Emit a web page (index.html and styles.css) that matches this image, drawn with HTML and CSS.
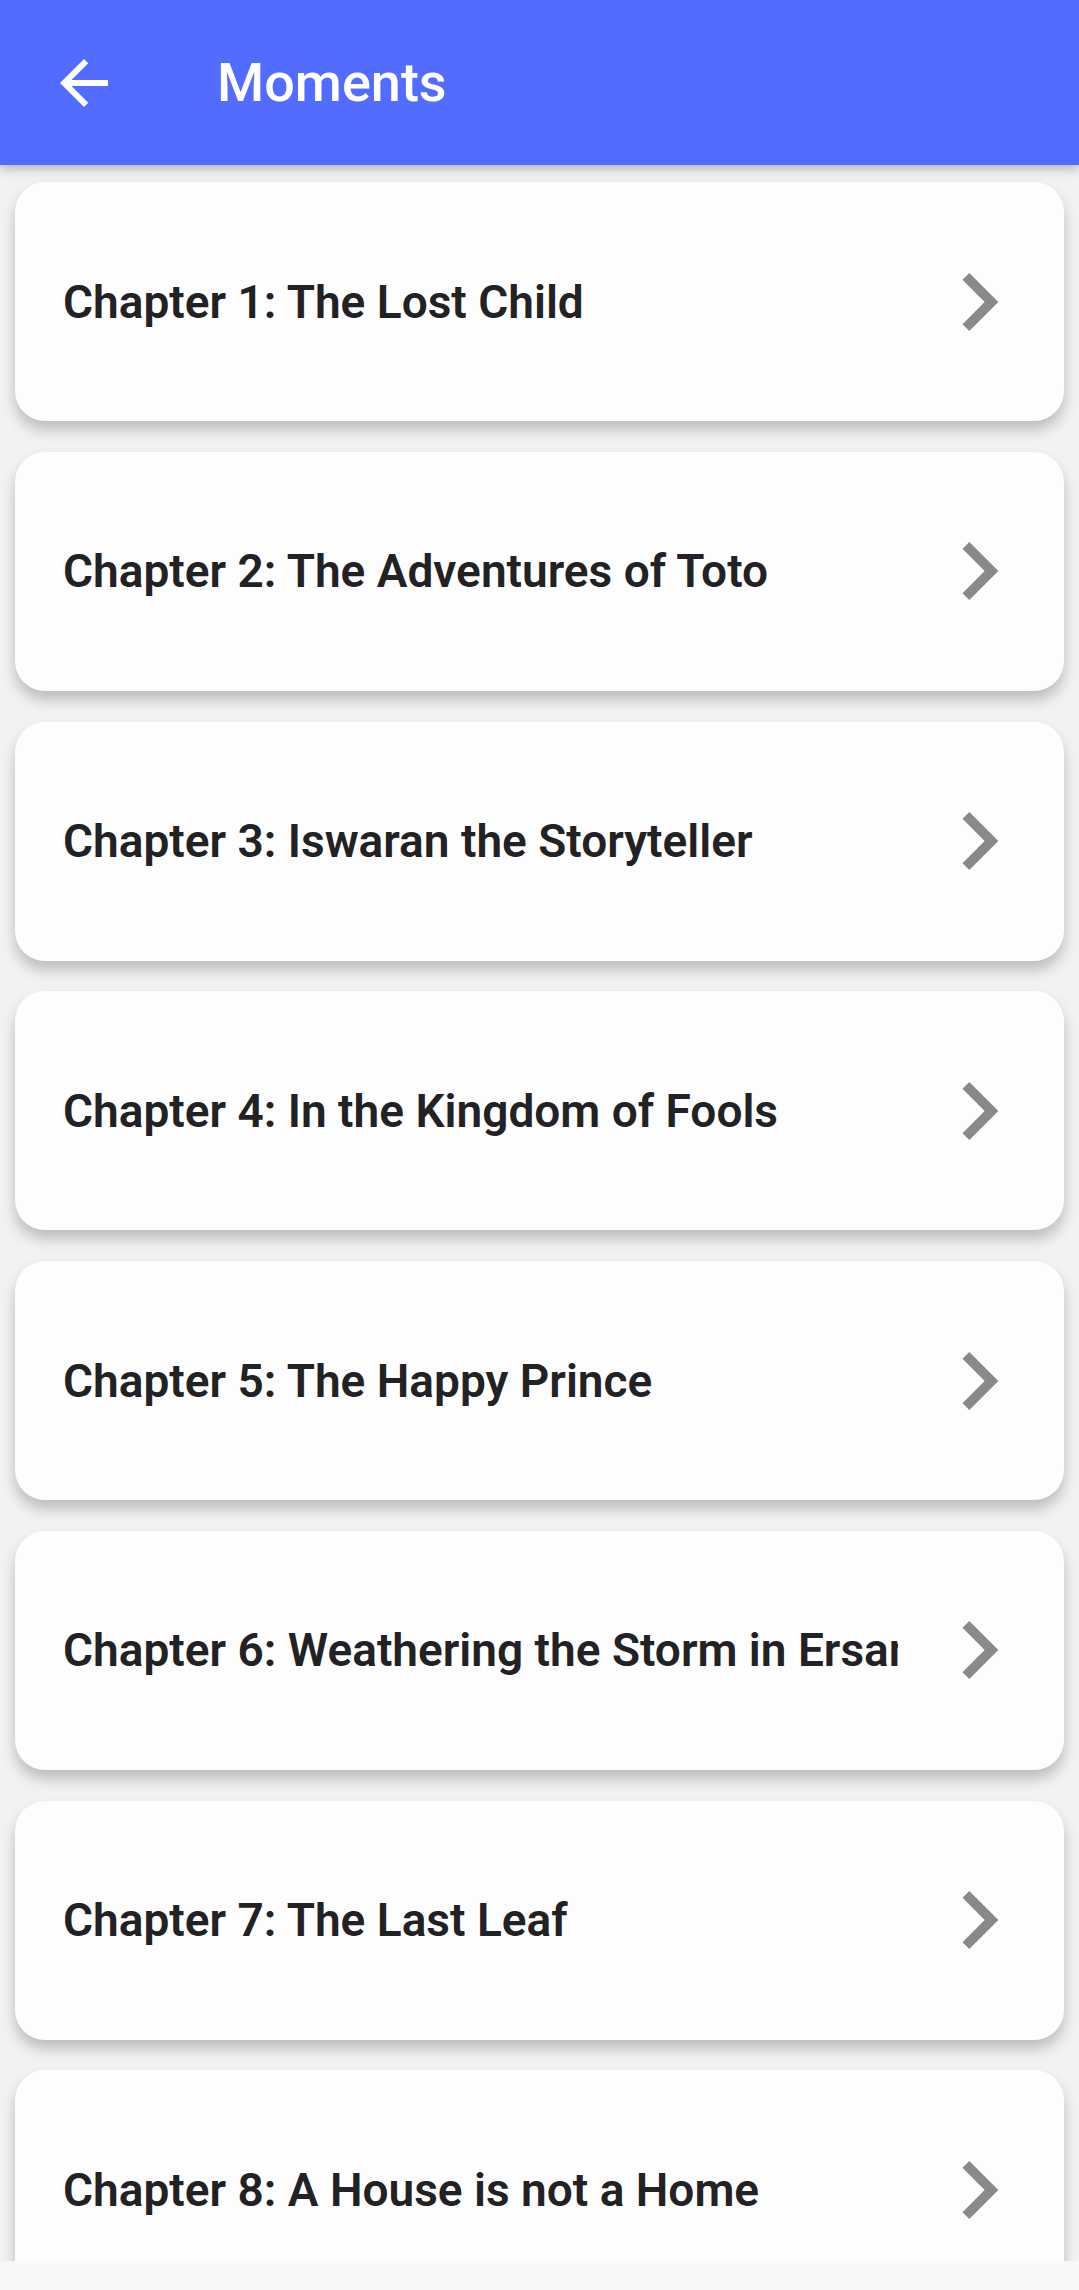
FILE: index.html
```html
<!DOCTYPE html>
<html>
<head>
<meta charset="utf-8">
<link rel="stylesheet" href="styles.css">
</head>
<body>
<header class="appbar">
  <button class="back" aria-label="Back">
    <svg viewBox="0 0 24 24" width="72" height="72"><path fill="#fff" d="M20 11H7.83l5.59-5.59L12 4l-8 8 8 8 1.41-1.41L7.83 13H20v-2z"/></svg>
  </button>
  <h1 class="title">Moments</h1>
</header>
<main class="list">
  <div class="card"><span class="label">Chapter 1: The Lost Child</span><svg class="chev" viewBox="0 0 24 24"><path d="M10 6L8.59 7.41 13.17 12l-4.58 4.59L10 18l6-6z"/></svg></div>
  <div class="card"><span class="label">Chapter 2: The Adventures of Toto</span><svg class="chev" viewBox="0 0 24 24"><path d="M10 6L8.59 7.41 13.17 12l-4.58 4.59L10 18l6-6z"/></svg></div>
  <div class="card"><span class="label">Chapter 3: Iswaran the Storyteller</span><svg class="chev" viewBox="0 0 24 24"><path d="M10 6L8.59 7.41 13.17 12l-4.58 4.59L10 18l6-6z"/></svg></div>
  <div class="card"><span class="label">Chapter 4: In the Kingdom of Fools</span><svg class="chev" viewBox="0 0 24 24"><path d="M10 6L8.59 7.41 13.17 12l-4.58 4.59L10 18l6-6z"/></svg></div>
  <div class="card"><span class="label">Chapter 5: The Happy Prince</span><svg class="chev" viewBox="0 0 24 24"><path d="M10 6L8.59 7.41 13.17 12l-4.58 4.59L10 18l6-6z"/></svg></div>
  <div class="card"><span class="label">Chapter 6: Weathering the Storm in Ersama</span><svg class="chev" viewBox="0 0 24 24"><path d="M10 6L8.59 7.41 13.17 12l-4.58 4.59L10 18l6-6z"/></svg></div>
  <div class="card"><span class="label">Chapter 7: The Last Leaf</span><svg class="chev" viewBox="0 0 24 24"><path d="M10 6L8.59 7.41 13.17 12l-4.58 4.59L10 18l6-6z"/></svg></div>
  <div class="card"><span class="label">Chapter 8: A House is not a Home</span><svg class="chev" viewBox="0 0 24 24"><path d="M10 6L8.59 7.41 13.17 12l-4.58 4.59L10 18l6-6z"/></svg></div>
</main>
<div class="navbar"></div>
</body>
</html>
```

FILE: styles.css
```css
html, body {
  margin: 0;
  padding: 0;
}
body {
  width: 1079px;
  height: 2290px;
  overflow: hidden;
  background: #f2f1f4;
  font-family: Roboto, "Liberation Sans", sans-serif;
  position: relative;
}
.appbar {
  height: 165px;
  background: #516cfe;
  display: flex;
  align-items: center;
  box-shadow: 0 4px 10px rgba(0,0,0,0.25);
  position: relative;
  z-index: 2;
}
.back {
  width: 72px;
  height: 72px;
  margin-left: 48px;
  padding: 0;
  border: 0;
  background: none;
  display: flex;
}
.title {
  margin: 0 0 0 97px;
  color: #fff;
  font-size: 54px;
  font-weight: 500;
}
.list {
  display: flex;
  flex-direction: column;
  gap: 30.75px;
  padding: 17px 15px 0 15px;
}
.card {
  height: 239px;
  background: #fefdfe;
  border-radius: 30px;
  box-shadow: 0 9px 14px rgba(0,0,0,0.22);
  display: flex;
  align-items: center;
  padding: 0 27px 0 48px;
  box-sizing: border-box;
}
.label {
  flex: 1;
  overflow: hidden;
  white-space: nowrap;
  font-size: 46px;
  font-weight: 600;
  color: #222124;
  margin-right: 23px;
}
.chev {
  width: 116px;
  height: 116px;
  fill: #898989;
  flex-shrink: 0;
}
.navbar {
  position: absolute;
  left: 0;
  right: 0;
  bottom: 0;
  height: 29px;
  background: #f8f7f9;
  z-index: 3;
}
```
